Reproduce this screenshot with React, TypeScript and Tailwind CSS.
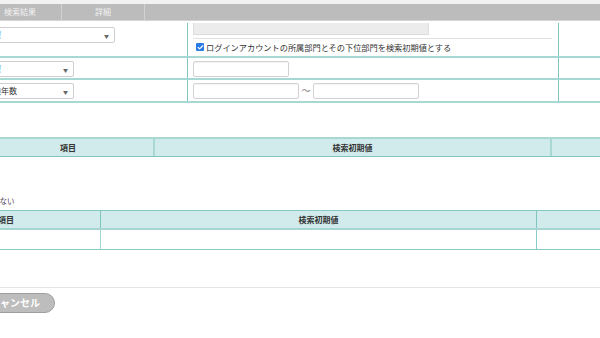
import { Check } from "lucide-react";

function FakeSelect({ width, children }: { width: string; children?: React.ReactNode }) {
  return (
    <div className={`${width} h-[16px] -ml-[4px] flex items-center justify-between border border-[#cfcfcf] rounded-[2px] bg-white pr-[5px] overflow-hidden`}>
      <div className="text-[8px] leading-none whitespace-nowrap">{children}</div>
      <span className="text-[5px] text-[#666] leading-none">▼</span>
    </div>
  );
}

function TextBox({ width }: { width: string }) {
  return <div className={`${width} h-[16px] border border-[#d2d2d2] rounded-[2px] bg-white shadow-[inset_0_1px_1px_rgba(0,0,0,0.05)]`} />;
}

export default function App() {
  return (
    <div className="w-[600px] h-[338px] overflow-hidden bg-white text-[#333] font-['Noto_Sans_CJK_JP','Noto_Sans',sans-serif]">
      {/* tabs */}
      <div className="h-[4px] bg-[#f2f2f2]" />
      <div className="h-[17px] bg-[#bcbcbc] flex border-b border-[#d4d4d4]">
        <div className="w-[62px] border-r border-[#d2d2d2] flex items-center pl-[4px] text-[8px] text-[#f2f2f2]">検索結果</div>
        <div className="w-[83px] border-r border-[#d2d2d2] flex items-center justify-center text-[8px] text-[#f2f2f2]">詳細</div>
      </div>

      {/* search form */}
      <div className="mt-[2px]">
        <div className="flex h-[35px] border-b-2 border-[#a6d8d4]">
          <div className="w-[188px] border-r border-[#7fc4bf] pt-[4px]">
            <FakeSelect width="w-[119px]">
              <span className="text-[#4a9fe0] -ml-[4px]">課</span>
            </FakeSelect>
          </div>
          <div className="w-[371px] border-r border-[#7fc4bf] pl-[5px] pr-[6px]">
            <div className="w-[236px] h-[12px] bg-[#ececec] border-x border-b border-[#dcdcdc]" />
            <div className="h-px bg-[#e0e0e0] mt-[3px]" />
            <div className="flex items-center gap-[2px] mt-[4px] pl-[3px]">
              <span className="w-[8px] h-[8px] rounded-[1px] bg-[#2a7be4] flex items-center justify-center">
                <Check size={7} strokeWidth={4} color="#fff" />
              </span>
              <span className="text-[8.2px] leading-none whitespace-nowrap">ログインアカウントの所属部門とその下位部門を検索初期値とする</span>
            </div>
          </div>
          <div className="flex-1" />
        </div>

        <div className="flex h-[22px] border-b-2 border-[#a6d8d4]">
          <div className="w-[188px] border-r border-[#7fc4bf] pt-[3px]">
            <FakeSelect width="w-[78px]">
              <span className="text-[#4a9fe0] -ml-[4px]">課</span>
            </FakeSelect>
          </div>
          <div className="w-[371px] border-r border-[#7fc4bf] pl-[5px] pt-[3px]">
            <TextBox width="w-[96px]" />
          </div>
          <div className="flex-1" />
        </div>

        <div className="flex h-[23px] border-b-2 border-[#a6d8d4]">
          <div className="w-[188px] border-r border-[#7fc4bf] pt-[3px]">
            <FakeSelect width="w-[78px]">
              <span className="-ml-[4px]">験年数</span>
            </FakeSelect>
          </div>
          <div className="w-[371px] border-r border-[#7fc4bf] pl-[5px] pt-[3px] flex items-start">
            <TextBox width="w-[106px]" />
            <span className="w-[14px] h-[16px] flex items-center justify-center text-[9px] text-[#777]">～</span>
            <TextBox width="w-[106px]" />
          </div>
          <div className="flex-1" />
        </div>
      </div>

      {/* table 1 */}
      <div className="mt-[34px] border-t-2 border-[#a9d7d4] border-b border-b-[#7fc4bf] bg-[#d1eaeb] h-[20px] flex text-[8px] font-bold">
        <div className="w-[155px] border-r-2 border-[#a9d7d4] flex items-center justify-center pr-[17px]">項目</div>
        <div className="w-[397px] border-r-2 border-[#a9d7d4] flex items-center justify-center">検索初期値</div>
        <div className="flex-1" />
      </div>

      <div className="mt-[40px] h-[13px] text-[7.5px] text-[#4b3f5c] leading-none whitespace-nowrap">
        <span className="-ml-[23px] inline-block">表示しない</span>
      </div>

      {/* table 2 */}
      <div className="border-t border-[#86c9c4]">
        <div className="h-[19px] bg-[#d1eaeb] border-b-2 border-[#a7d6d2] flex text-[8px] font-bold">
          <div className="w-[101px] border-r border-[#7fc4bf] flex items-center">
            <span className="-ml-[2px]">項目</span>
          </div>
          <div className="w-[436px] border-r border-[#7fc4bf] flex items-center justify-center">検索初期値</div>
          <div className="flex-1" />
        </div>
        <div className="h-[20px] border-b border-[#86cbc5] flex">
          <div className="w-[101px] border-r border-[#a9d7d4]" />
          <div className="w-[436px] border-r border-[#86cbc5]" />
          <div className="flex-1" />
        </div>
      </div>

      {/* footer */}
      <div className="mt-[37px] h-px bg-[#e4e4e4]" />
      <div className="mt-[5px] overflow-hidden">
        <button className="block -ml-[17px] w-[72px] h-[20px] rounded-full bg-[#bdbdbd] border border-[#9e9e9e] text-white text-[10px] font-bold leading-none pl-[6px] text-left">
          キャンセル
        </button>
      </div>
    </div>
  );
}
